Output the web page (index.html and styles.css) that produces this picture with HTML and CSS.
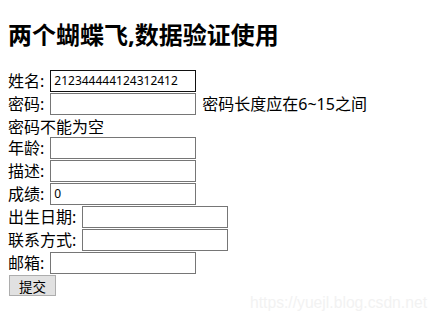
FILE: index.html
```html
<!DOCTYPE html>
<html lang="zh-CN">
<head>
<meta charset="utf-8">
<title>数据验证</title>
<link rel="stylesheet" href="styles.css">
</head>
<body>
<h2 class="title">两个蝴蝶飞,数据验证使用</h2>
<form class="form">
  <div class="row"><span class="label">姓名:</span><input class="field field-focus" type="text" value="212344444124312412"></div>
  <div class="row"><span class="label">密码:</span><input class="field" type="text"><span class="hint">密码长度应在6~15之间</span></div>
  <div class="row row-text">密码不能为空</div>
  <div class="row"><span class="label">年龄:</span><input class="field" type="text"></div>
  <div class="row"><span class="label">描述:</span><input class="field" type="text"></div>
  <div class="row"><span class="label">成绩:</span><input class="field" type="text" value="0"></div>
  <div class="row"><span class="label">出生日期:</span><input class="field" type="text"></div>
  <div class="row"><span class="label">联系方式:</span><input class="field" type="text"></div>
  <div class="row"><span class="label">邮箱:</span><input class="field" type="text"></div>
  <div class="row"><button class="submit" type="button">提交</button></div>
</form>
<div class="watermark">https://yuejl.blog.csdn.net</div>
</body>
</html>
```
FILE: styles.css
```css
html, body {
  background: #fff;
}
body {
  margin: 0;
  padding: 8px 8px 0 8px;
  font-family: "Noto Sans", "Noto Sans CJK SC", sans-serif;
  font-size: 16px;
  color: #000;
  position: relative;
  height: 314px;
  box-sizing: border-box;
  overflow: hidden;
}
.title {
  margin: 13px 0 20px;
  font-size: 24px;
  line-height: 28px;
  font-weight: bold;
}
.form {
  margin: 0;
}
.row {
  display: flex;
  align-items: center;
  height: 23px;
  gap: 6px;
  white-space: nowrap;
}
.row-text {
  height: 21px;
}
.label {
  line-height: 20px;
}
.field {
  box-sizing: border-box;
  width: 146px;
  height: 22px;
  margin: 0;
  padding: 1px 3px;
  border: 1px solid #767676;
  border-radius: 0;
  font-family: "Noto Sans", "Noto Sans CJK SC", sans-serif;
  font-size: 12px;
  color: #000;
  background: #fff;
  outline: none;
}
.field-focus {
  border-color: #111;
}
.hint {
  line-height: 20px;
}
.submit {
  box-sizing: border-box;
  width: 47px;
  height: 21px;
  margin: 0 0 0 1px;
  padding: 0 6px;
  border: 1px solid #adadad;
  border-radius: 0;
  background: #e1e1e1;
  font-family: "Noto Sans CJK SC", sans-serif;
  font-size: 13.5px;
  line-height: 18px;
  color: #000;
}
.watermark {
  position: absolute;
  right: 11px;
  top: 295px;
  font-family: "Liberation Sans", Arial, sans-serif;
  font-size: 15.7px;
  line-height: 16px;
  color: #f2f2f2;
}
```
